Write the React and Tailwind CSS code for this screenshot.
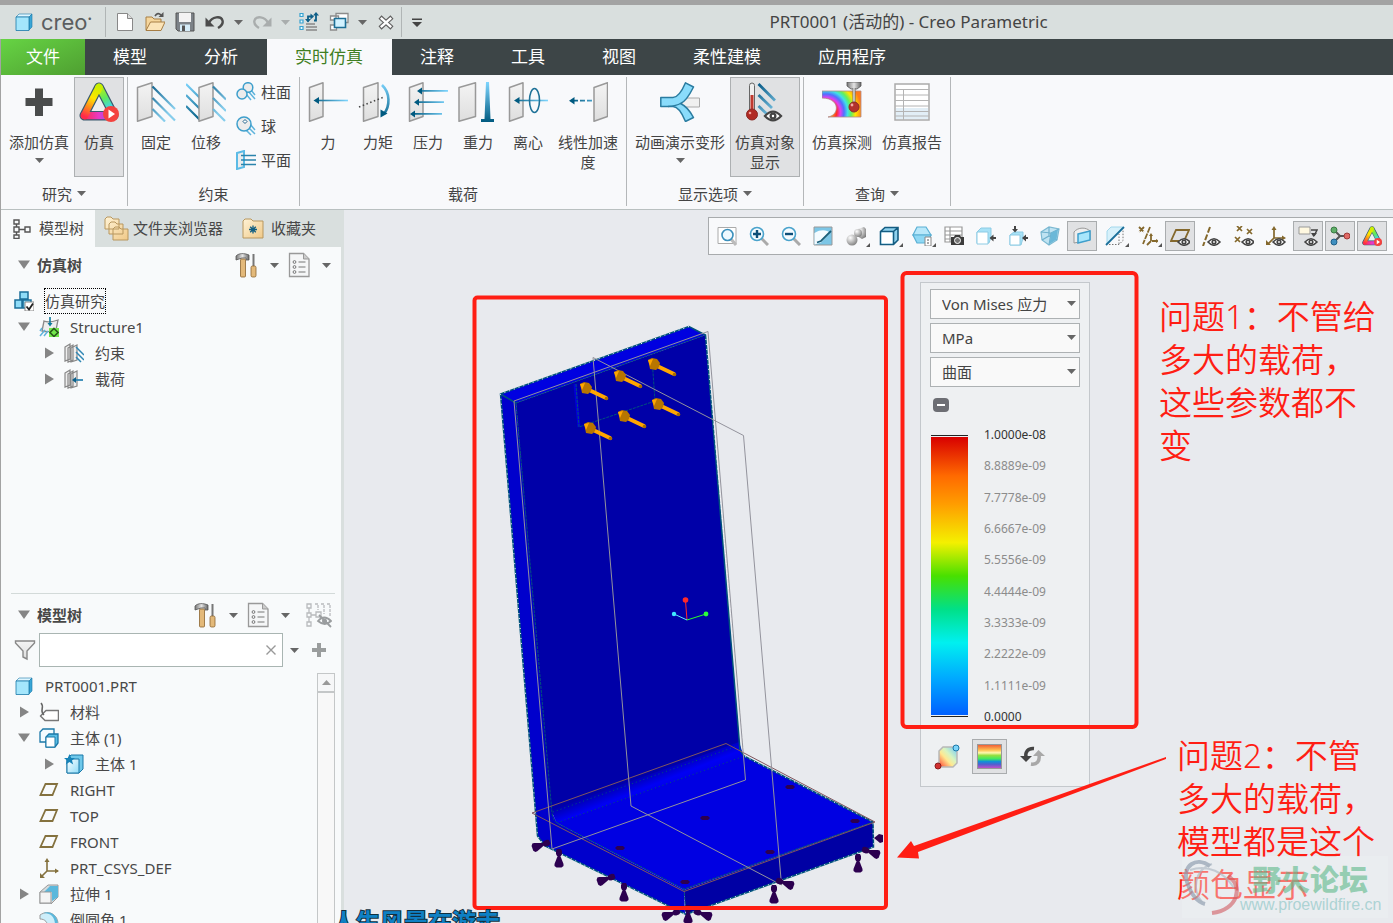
import React, { useState } from 'react';

const EDGE = '#1b78a8';

function Caret({ color = '#666' }) {
  return (
    <svg width="9" height="5" viewBox="0 0 9 5" className="shrink-0" aria-hidden="true">
      <path d="M0 0h9L4.500 5z" fill={color} />
    </svg>
  );
}

function Icon({ size = 20, children }) {
  return (
    <svg width={size} height={size} viewBox={`0 0 ${size} ${size}`} fill="none" className="shrink-0" aria-hidden="true">
      {children}
    </svg>
  );
}

function Defs() {
  return (
    <svg width="0" height="0" className="absolute" aria-hidden="true">
      <defs>
        <linearGradient id="plate" x1="0" y1="0" x2="0" y2="1">
          <stop offset="0" stopColor="#f4f4f4" />
          <stop offset="1" stopColor="#dedede" />
        </linearGradient>
        <linearGradient id="fadeR" gradientUnits="userSpaceOnUse" x1="4" y1="0" x2="40" y2="0">
          <stop offset="0" stopColor="#005a80" />
          <stop offset="1" stopColor="#7fd6ff" />
        </linearGradient>
        <linearGradient id="fadeD" gradientUnits="userSpaceOnUse" x1="16" y1="0" x2="40" y2="24">
          <stop offset="0" stopColor="#0a5c88" />
          <stop offset="1" stopColor="#86cdec" />
        </linearGradient>
        <linearGradient id="fadeV" gradientUnits="userSpaceOnUse" x1="0" y1="0" x2="0" y2="40">
          <stop offset="0" stopColor="#7fd6ff" />
          <stop offset="1" stopColor="#005a80" />
        </linearGradient>
        <linearGradient id="triL" gradientUnits="userSpaceOnUse" x1="20" y1="4" x2="5" y2="34">
          <stop offset="0" stopColor="#c8f000" />
          <stop offset=".4" stopColor="#ffe600" />
          <stop offset=".7" stopColor="#ff8a1a" />
          <stop offset="1" stopColor="#ff2a4a" />
        </linearGradient>
        <linearGradient id="triR" gradientUnits="userSpaceOnUse" x1="20" y1="4" x2="35" y2="34">
          <stop offset="0" stopColor="#c8f000" />
          <stop offset=".4" stopColor="#5fe860" />
          <stop offset=".7" stopColor="#40d8e8" />
          <stop offset="1" stopColor="#5080ff" />
        </linearGradient>
        <linearGradient id="triB" gradientUnits="userSpaceOnUse" x1="5" y1="34" x2="35" y2="34">
          <stop offset="0" stopColor="#ff2a4a" />
          <stop offset=".5" stopColor="#e83ac8" />
          <stop offset="1" stopColor="#7060ff" />
        </linearGradient>
        <linearGradient id="folder" x1="0" y1="0" x2="1" y2="1">
          <stop offset="0" stopColor="#fff3d6" />
          <stop offset="1" stopColor="#f0c988" />
        </linearGradient>
        <linearGradient id="aqua" x1="0" y1="0" x2="1" y2="1">
          <stop offset="0" stopColor="#ffffff" />
          <stop offset="1" stopColor="#8fdcf8" />
        </linearGradient>
        <linearGradient id="steel" x1="0" y1="0" x2="1" y2="0">
          <stop offset="0" stopColor="#777" />
          <stop offset=".5" stopColor="#e4e4e4" />
          <stop offset="1" stopColor="#666" />
        </linearGradient>
        <radialGradient id="probe" gradientUnits="userSpaceOnUse" cx="4" cy="30" r="36">
          <stop offset=".2" stopColor="#ff8a1a" />
          <stop offset=".3" stopColor="#ff2a2a" />
          <stop offset=".4" stopColor="#e040f0" />
          <stop offset=".5" stopColor="#5070ff" />
          <stop offset=".6" stopColor="#40e0e8" />
          <stop offset=".7" stopColor="#60f060" />
          <stop offset=".82" stopColor="#ffe600" />
          <stop offset="1" stopColor="#ff7a1a" />
        </radialGradient>
        <radialGradient id="ball" cx=".35" cy=".3" r=".8">
          <stop offset="0" stopColor="#ffffff" />
          <stop offset="1" stopColor="#777" />
        </radialGradient>
      </defs>
    </svg>
  );
}

/* ---------- shared drawings ---------- */

function Triangle() {
  return (
    <>
      <path d="M20 5.500 5.500 33.500h29z" stroke="#3b5a6e" strokeWidth="10" strokeLinejoin="round" />
      <path d="M5.500 33.500h29" stroke="url(#triB)" strokeWidth="7.500" strokeLinecap="round" />
      <path d="M20 5.500 34.500 33.500" stroke="url(#triR)" strokeWidth="7.500" strokeLinecap="round" />
      <path d="M20 5.500 5.500 33.500" stroke="url(#triL)" strokeWidth="7.500" strokeLinecap="round" />
      <path d="M20 13 11.500 29.500h17z" fill="#eef0f1" stroke="#3b5a6e" strokeWidth="1.200" />
      <circle cx="32" cy="32" r="8" fill="#f4423f" />
      <path d="M29.500 27.500v9l6.500-4.500z" fill="#fff" />
    </>
  );
}

function Eye({ x, y }) {
  return (
    <g transform={`translate(${x} ${y})`}>
      <path d="M-6 0Q0-6.500 6 0 0 6.500-6 0z" fill="#fff" stroke="#444" strokeWidth="1.600" />
      <circle r="2.600" fill="#444" />
      <circle r=".9" fill="#fff" />
    </g>
  );
}

function Cube() {
  return (
    <g stroke={EDGE} strokeLinejoin="round">
      <path d="M2 5 5 2h13l-3 3z" fill="#dff6ff" strokeWidth=".6" />
      <path d="M15 5l3-3v13l-3 3z" fill="#3aa6d6" strokeWidth=".6" />
      <path d="M2 5h13v13.500H2z" fill="#a4e6fc" strokeWidth=".8" />
    </g>
  );
}

const Plate = ({ d }) => <path d={d} fill="url(#plate)" stroke="#999" strokeWidth="1.500" strokeLinejoin="round" />;

/* ---------- ribbon icons, 40 x 40 ---------- */

const ribbonIcons = {
  add: <path d="M16 6.500h8V16h9.500v8H24v10h-8V24H6.500v-8H16z" fill="#4a4c4c" />,
  sim: <Triangle />,
  fixed: (
    <>
      <Plate d="M1.500 5.500 16 .8v33.700L1.500 39.200z" />
      <path d="M16.500 4.500 39 27M16.500 16 39 38.500M16.500 27 29 39.500" stroke="url(#fadeD)" strokeWidth="2.200" />
    </>
  ),
  shift: (
    <>
      <path d="M0 2 14 16M0 13 14 27M0 24l14 14" stroke="url(#fadeV)" strokeWidth="2.200" />
      <Plate d="M13 5.500 27 .8v33.700L13 39.200z" />
      <path d="M27 4.500 40 17.500M27 16l13 13M27 27l12 12" stroke="url(#fadeD)" strokeWidth="2.200" />
    </>
  ),
  force: (
    <>
      <Plate d="M1.500 5.500 15 .8v33.700L1.500 39.200z" />
      <path d="M9 17.700h31v1.600H9z" fill="url(#fadeR)" />
      <path d="M5.500 18.500 11 15v7z" fill="#005a80" />
    </>
  ),
  moment: (
    <>
      <Plate d="M5.500 5.500 20 .8v33.700L5.500 39.200z" />
      <path d="M1 25 26 15" stroke="#444" strokeWidth="1.500" strokeDasharray="1.500 2.500" />
      <path d="M24 3C32.500 11 32 24 26 32" stroke="url(#fadeV)" strokeWidth="2.600" />
      <path d="M22.500 35.500V27.500l7 4z" fill="#005a80" />
    </>
  ),
  pressure: (
    <>
      <Plate d="M1.500 5.500 15 .8v33.700L1.500 39.200z" />
      <path d="M11 8h29v1.800H11zM8 19.300h28v1.800H8zM4 31h30v1.800H4z" fill="url(#fadeR)" />
      <path d="M9 9l5-3.500v7zM6 20.200l5-3.500v7zM2 32l5-3.500v7z" fill="#005a80" />
    </>
  ),
  gravity: (
    <>
      <Plate d="M1 5.500 17.500.8v33.700L1 39.200z" />
      <path d="M28 0h3l1.500 37H36v3H23v-3h3.500z" fill="url(#fadeV)" />
    </>
  ),
  spin: (
    <>
      <Plate d="M1.500 5.500 15 .8v33.700L1.500 39.200z" />
      <path d="M9 17.700h31v1.600H9z" fill="url(#fadeR)" />
      <path d="M6 18.500 11.500 15v7z" fill="#005a80" />
      <ellipse cx="26.500" cy="18.500" rx="5" ry="12" stroke="#1f7298" strokeWidth="1.600" />
    </>
  ),
  linear: (
    <>
      <Plate d="M26 5.500 39.500.8v33.700L26 39.200z" />
      <path d="M6 17.800h4v1.800H6zM12 17.800h5v1.800h-5zM19 17.800h5v1.800h-5z" fill="url(#fadeR)" />
      <path d="M1 18.700 6.500 15v7.500z" fill="#005a80" />
    </>
  ),
  deform: (
    <>
      <path d="M22 16h17.500v9H22z" fill="#f0f0f0" stroke="#aaa" />
      <path d="M.8 15.500H13C18 15.500 22 9 25.500.8L33.500 5C29 14 25 20 20.500 21.500 26 24 30 29 33.500 35.500l-8 4C22 31 18 24.500 13 24.500H.8z" fill="#8adcfb" stroke="#2a7ca0" strokeWidth="1.500" strokeLinejoin="round" />
      <path d="M8 24.500C14 24 18 23 20.500 21.500" stroke="#2a7ca0" strokeWidth="1.300" />
    </>
  ),
  objects: (
    <>
      <rect x="4.500" y="1" width="5" height="30" rx="2.500" fill="#eee" stroke="#666" />
      <path d="M5.500 13h3v17h-3z" fill="#c0392f" />
      <circle cx="7" cy="32.500" r="5.500" fill="#b02a24" stroke="#8a2a26" />
      <circle cx="5" cy="31" r="1.300" fill="#f0a09a" />
      <path d="M13.500 2 30 18.500M13.500 13 27 26M13.500 24 24 34" stroke="url(#fadeD)" strokeWidth="2.800" />
      <g transform="translate(28 34) scale(1.350)"><Eye x={0} y={0} /></g>
    </>
  ),
  probe: (
    <>
      <path d="M0 9h39v26H6C18 33 18 16 0 16z" fill="url(#probe)" stroke="#b08a8a" strokeWidth=".8" />
      <path d="M25 0h14v4l-4 3h-6l-4-3z" fill="url(#steel)" stroke="#555" strokeWidth=".8" />
      <path d="M30.500 6h3v18h-3z" fill="url(#steel)" />
      <circle cx="32" cy="25" r="5" fill="#b3322c" stroke="#8a2a26" />
      <circle cx="30" cy="23" r="1.400" fill="#f3a9a4" />
    </>
  ),
  report: (
    <>
      <path d="M3 2h34v36H3z" fill="#fff" stroke="#aaa" strokeWidth="1.500" />
      <path d="M4 26h32v11H4z" fill="#e2eef6" />
      <path d="M3 7.500h34M3 13h34M3 18.500h34M3 24h34M3 29.500h34M3 34h34M11.500 7.500V38" stroke="#b4b4b4" />
    </>
  ),
};

const groups = [
  {
    label: '研究',
    more: true,
    items: [
      { icon: 'add', text: '添加仿真', w: 'w-[70px]', more: true },
      { icon: 'sim', text: '仿真', w: 'w-[50px]', on: true },
    ],
  },
  {
    label: '约束',
    items: [
      { icon: 'fixed', text: '固定', w: 'w-[50px]' },
      { icon: 'shift', text: '位移', w: 'w-[50px]' },
    ],
    side: true,
  },
  {
    label: '载荷',
    items: [
      { icon: 'force', text: '力', w: 'w-[50px]' },
      { icon: 'moment', text: '力矩', w: 'w-[50px]' },
      { icon: 'pressure', text: '压力', w: 'w-[50px]' },
      { icon: 'gravity', text: '重力', w: 'w-[50px]' },
      { icon: 'spin', text: '离心', w: 'w-[50px]' },
      { icon: 'linear', text: '线性加速度', w: 'w-[70px]' },
    ],
  },
  {
    label: '显示选项',
    more: true,
    items: [
      { icon: 'deform', text: '动画演示变形', w: 'w-[100px]', more: true },
      { icon: 'objects', text: '仿真对象显示', w: 'w-[70px]', on: true },
    ],
  },
  {
    label: '查询',
    more: true,
    items: [
      { icon: 'probe', text: '仿真探测', w: 'w-[70px]' },
      { icon: 'report', text: '仿真报告', w: 'w-[70px]' },
    ],
  },
];

const sideItems = [
  {
    text: '柱面',
    icon: (
      <>
        <path d="M10 12l5 6M12 9l7 8M15 8l4 5" stroke="#5fb4dc" strokeWidth="1.500" />
        <circle cx="12" cy="5.500" r="4.800" fill="#ececec" stroke="#3e9fcc" strokeWidth="1.500" />
        <circle cx="6" cy="12" r="5" fill="#ececec" stroke="#3e9fcc" strokeWidth="1.500" />
      </>
    ),
  },
  {
    text: '球',
    icon: (
      <>
        <path d="M9 13l6 6M12 11l7 7M14 8l5 6" stroke="#5fb4dc" strokeWidth="1.500" />
        <circle cx="8" cy="8" r="7" fill="#ececec" stroke="#3e9fcc" strokeWidth="1.500" />
        <path d="M9 3.500l2 2-2 2-2-2z" fill="#fff" stroke="#1b5f88" />
      </>
    ),
  },
  {
    text: '平面',
    icon: (
      <>
        <path d="M1 3l7-2v16l-7 2z" fill="#ececec" stroke="#5bbbe6" strokeWidth="2" />
        <path d="M5 5.500h15M5 10h15M5 14.500h15" stroke="#2a84ac" strokeWidth="1.500" />
      </>
    ),
  },
];

function RibbonButton({ item }) {
  return (
    <button
      type="button"
      className={`${item.w} flex h-[100px] flex-col items-center border px-1 pt-1 leading-5 ${
        item.on ? 'border-[#adb0b2] bg-[#e0e1e3]' : 'border-transparent'
      }`}
    >
      <Icon size={40}>{ribbonIcons[item.icon]}</Icon>
      <span className="-mx-1 mt-[10px] text-center">
        {item.text.length === 5 ? <>线性加速<br />度</> : item.text.startsWith('仿真对象') ? <>仿真对象<br />显示</> : item.text}
      </span>
      {item.more && <span className="pt-[6px]"><Caret /></span>}
    </button>
  );
}

function Ribbon() {
  return (
    <div className="flex border-b border-[#b9c0c0] bg-[#f8f9fb] pt-[2px] pb-[3px] text-[15px] text-[#444]">
      {groups.map(g => (
        <section key={g.label} className="flex shrink-0 flex-col border-r border-[#b4b7b9] px-[3px]">
          <div className="flex h-[100px]">
            {g.items.map(item => <RibbonButton key={item.text} item={item} />)}
            {g.side && (
              <div className="-mt-[2px] flex w-[65px] flex-col">
                {sideItems.map(s => (
                  <button key={s.text} type="button" className="flex h-[34px] items-center gap-[5px] pl-[5px] whitespace-nowrap">
                    <Icon>{s.icon}</Icon>
                    {s.text}
                  </button>
                ))}
              </div>
            )}
          </div>
          <div className="flex h-[29px] items-center justify-center gap-[5px] pt-1 leading-5">
            {g.label}
            {g.more && <Caret />}
          </div>
        </section>
      ))}
    </div>
  );
}

/* ---------- title bar ---------- */

const quick = {
  fresh: <><path d="M2.500 1.500h10l5 5v12h-15z" fill="#fff" stroke="#888" /><path d="M12.500 1.500v5h5" fill="#ddd" stroke="#888" /></>,
  open: (
    <>
      <path d="M1 18V5h6l2 2h7v4" fill="#f5d69c" stroke="#a77e45" />
      <path d="M1 18.500 5.500 10H20l-4 8.500z" fill="#fbe4b8" stroke="#a77e45" />
      <path d="M10 4c2-3 4-3 6-1" stroke="#555" strokeWidth="1.600" /><path d="M18.500 0v5h-5z" fill="#555" />
    </>
  ),
  save: (
    <>
      <path d="M1 1h18v18H3l-2-2z" fill="#7c8288" stroke="#555" />
      <path d="M4 1h12v9H4z" fill="#f3f3f3" /><path d="M5 12.500h10V19H5z" fill="#d5ecf8" /><path d="M7 13.500h3V19H7z" fill="#555" />
    </>
  ),
  undo: <><path d="M4 11C7 4.500 16 3.500 17.500 8.500c1 3.500-2 6-4.500 7.500" stroke="#4c4c4c" strokeWidth="2.400" /><path d="M.5 5.500V14.500h9z" fill="#4c4c4c" /></>,
  redo: <><path d="M16 11C13 4.500 4 3.500 2.500 8.500c-1 3.500 2 6 4.500 7.500" stroke="#a9adad" strokeWidth="2.400" /><path d="M19.500 5.500V14.500h-9z" fill="#a9adad" /></>,
  regen: (
    <>
      <path d="M1 1.500h3v3H1zM1 8h3v3H1zM1 14.500h3v3H1z" fill="#e8faff" stroke="#37a2d0" strokeWidth="1.200" />
      <path d="M7 12h9M7 15h11M7 18h11" stroke="#888" strokeWidth="1.500" />
      <path d="M9 9.500V4.500h3" stroke="#0e5f88" strokeWidth="1.800" /><path d="M11.500 1.500 15 4.500l-3.500 3zM6 7h6L9 10.500z" fill="#0e5f88" />
      <path d="M17 1.500v7h-2" stroke="#0e5f88" strokeWidth="1.800" /><path d="M14 3.500 17 0l3 3.500z" fill="#0e5f88" />
    </>
  ),
  windows: (
    <>
      <path d="M7 1.500h12v9H7zM1.500 4h8v4h-8zM1.500 13h6v5h-6z" fill="#fff" stroke="#8c8c8c" strokeWidth="1.300" />
      <path d="M5.500 6.500h11v9h-11z" fill="#d2f2ff" stroke="#1d6f96" strokeWidth="1.600" />
    </>
  ),
  close: <><path d="M4 5l12 11M16 5 4 16" stroke="#606060" strokeWidth="4.500" /><path d="M4.800 5.800l10.400 9.400M15.200 5.800 4.800 15.200" stroke="#fff" strokeWidth="2.400" /></>,
};

function QuickButton({ name, label }) {
  return (
    <button type="button" aria-label={label} className="flex h-full w-[30px] items-center justify-center">
      <Icon>{quick[name]}</Icon>
    </button>
  );
}

function QuickCaret({ label, color }) {
  return (
    <button type="button" aria-label={label} className="flex h-full w-[17px] items-center justify-center">
      <Caret color={color} />
    </button>
  );
}

function TitleBar() {
  return (
    <header className="flex h-[39px] items-center border-t-[5px] border-[#a3a3a3] bg-[#d9dfde]">
      <div className="flex h-[30px] w-[106px] shrink-0 items-center border-r border-[#b0b5b5] pl-[14px] font-['Inter'] text-[22px] text-[#5b5e60]">
        <Icon><Cube /></Icon>
        <span className="pl-[7px] leading-6">creo<span className="align-top text-[8px] leading-4">•</span></span>
      </div>
      <div className="flex h-full shrink-0 items-center pl-1">
        <QuickButton name="fresh" label="新建" />
        <QuickButton name="open" label="打开" />
        <QuickButton name="save" label="保存" />
        <QuickButton name="undo" label="撤消" />
        <QuickCaret label="撤消列表" />
        <QuickButton name="redo" label="重做" />
        <QuickCaret label="重做列表" color="#a9adad" />
        <QuickButton name="regen" label="重新生成" />
        <QuickButton name="windows" label="窗口" />
        <QuickCaret label="窗口列表" />
        <QuickButton name="close" label="关闭" />
        <span className="h-[30px] w-px bg-[#b0b5b5]" />
        <button type="button" aria-label="自定义" className="flex h-full w-[30px] items-center justify-center">
          <Icon><path d="M5 6.500h10v1.500H5zM5 10h10l-5 5z" fill="#444" /></Icon>
        </button>
      </div>
      <h1 className="flex-1 truncate pr-2 text-center text-[17px] text-[#444]">PRT0001 (活动的) - Creo Parametric</h1>
    </header>
  );
}

const tabs = ['模型', '分析', '实时仿真', '注释', '工具', '视图', '柔性建模', '应用程序'];

function TabBar({ active, onSelect }) {
  return (
    <nav className="flex h-9 bg-[#3d4547] text-[17px] text-white">
      <button type="button" className="w-[84px] bg-linear-to-br from-[#66d444] to-[#4f9f31]">文件</button>
      {tabs.map(t => (
        <button
          key={t}
          type="button"
          onClick={() => onSelect(t)}
          className={`pr-[29px] pl-7 whitespace-nowrap ${t === active ? 'bg-[#f8f9fb] text-[#3f7f22]' : ''}`}
        >
          {t}
        </button>
      ))}
    </nav>
  );
}

/* ---------- left panel ---------- */

const planeIcon = <path d="M6.500 4H18l-4.500 11H1.500z" stroke="#84713e" strokeWidth="1.800" />;

const platesIcon = (
  <path d="M1 4l5-3v15l-5 2zM4 5l5-3v15l-5 2zM7 5l6-3v15l-6 2z" fill="#eee" stroke="#888" strokeWidth="1.200" />
);

const treeIcons = {
  study: (
    <>
      <path d="M6 1h8v7H6zM1 9h7v8H1zM9 9h8v8H9z" fill="#8fdcf8" stroke="#1b6f9a" strokeWidth="1.500" />
      <path d="M11 11h9v9h-9z" fill="#fff" stroke="#888" /><path d="M12.500 15.500l2.500 3 4-6" stroke="#222" strokeWidth="1.800" />
    </>
  ),
  structure: (
    <>
      <path d="M5 4c4 2 8 1 14-1l-2 10c-5 2-9 2-14 1z" fill="#eee" stroke="#888" strokeWidth="1.300" />
      <path d="M11 0v8" stroke="#0e7a9c" strokeWidth="1.600" /><path d="M8.500 6h5L11 9.500z" fill="#0e7a9c" />
      <path d="M1 19l5-6M5 19l4-5M1 14l2-3" stroke="#5fb4dc" strokeWidth="1.500" />
      <path d="M10 11h10v9H10z" fill="#74e84c" /><path d="M15 11.500l4 4-4 4-4-4z" stroke="#285a1a" strokeWidth="1.600" />
    </>
  ),
  constraints: <>{platesIcon}<path d="M12 4l8 8M12 9l8 8M12 14l5 5" stroke="#2f86b4" strokeWidth="1.500" /></>,
  loads: <>{platesIcon}<path d="M10 11h9" stroke="#2f86b4" strokeWidth="1.800" /><path d="M8 11l4-3v6z" fill="#0e5f88" /></>,
  part: <Cube />,
  material: (
    <>
      <path d="M7 8.500h12.500v10H6L1.500 14z" fill="#fff" stroke="#777" strokeWidth="1.500" strokeLinejoin="round" />
      <path d="M2 1c4 4-2 8 3 12" stroke="#666" strokeWidth="1.600" />
    </>
  ),
  bodies: (
    <>
      <path d="M1 4l3-3h11v11l-2 2H1z" fill="#f4fcff" stroke={EDGE} strokeWidth="1.300" />
      <path d="M7 9l3-3h9v9l-3 4H7z" fill="#5bbfe6" stroke={EDGE} strokeWidth="1.300" /><path d="M7 9h9v10H7z" fill="#fff" stroke={EDGE} />
    </>
  ),
  body: (
    <>
      <path d="M3 5l4-4h12v14l-4 4H3z" fill="#6fc8ea" stroke={EDGE} /><path d="M3 5h12v14H3z" fill="url(#aqua)" stroke={EDGE} />
      <path d="M5.500 0l1.700 4H11L8 6.500l1.200 4-3.700-2.500-3.700 2.500 1.200-4L0 4h3.800z" fill="#1783b8" />
    </>
  ),
  plane: planeIcon,
  csys: (
    <>
      <path d="M8 2v11h11M8 13l-6 6" stroke="#84713e" strokeWidth="1.600" />
      <path d="M8 0l2.500 4h-5zM20 13l-4 2.500v-5zM1 20v-5l5 5z" fill="#84713e" />
    </>
  ),
  extrude: (
    <>
      <path d="M1 8l8-7h10v12l-7 7H1z" fill="#d6dadc" stroke="#999" /><path d="M5 8l6-6h8v11l-6 4V8z" fill="#5bb8dc" />
      <path d="M1 8h11v11H1z" fill="#f4f4f4" stroke="#999" />
    </>
  ),
  round: <><path d="M1 5C10-1 19 5 19 14v5H9C9 12 6 9 1 9z" fill="#cdeefa" stroke="#999" /><path d="M4 3c9 0 12 5 12 12h3C19 6 12 0 4 3z" fill="#5bb8dc" /></>,
};

const studyRows = [
  { icon: 'study', text: '仿真研究', level: 0, selected: true },
  { icon: 'structure', text: 'Structure1', level: 1, open: true },
  { icon: 'constraints', text: '约束', level: 2, open: false },
  { icon: 'loads', text: '载荷', level: 2, open: false },
];

const modelRows = [
  { icon: 'part', text: 'PRT0001.PRT', level: 0 },
  { icon: 'material', text: '材料', level: 1, open: false },
  { icon: 'bodies', text: '主体 (1)', level: 1, open: true },
  { icon: 'body', text: '主体 1', level: 2, open: false },
  { icon: 'plane', text: 'RIGHT', level: 1 },
  { icon: 'plane', text: 'TOP', level: 1 },
  { icon: 'plane', text: 'FRONT', level: 1 },
  { icon: 'csys', text: 'PRT_CSYS_DEF', level: 1 },
  { icon: 'extrude', text: '拉伸 1', level: 1, open: false },
  { icon: 'round', text: '倒圆角 1', level: 1 },
];

function Twisty({ open }) {
  return (
    <svg width="12" height="12" viewBox="0 0 12 12" aria-hidden="true">
      <path d={open ? 'M0 1.500h12L6 10z' : 'M2 .5 11 6l-9 5.500z'} fill="#858585" />
    </svg>
  );
}

function Tree({ rows }) {
  return (
    <ul className="flex-1">
      {rows.map(row => (
        <li key={row.text} className={`flex h-[26px] items-center ${row.level === 2 ? 'pl-[38px]' : 'pl-[13px]'}`}>
          {row.level > 0 && (
            <span className="w-[25px] pl-1">
              {row.open !== undefined && (
                <button type="button" aria-label={row.text} className="flex"><Twisty open={row.open} /></button>
              )}
            </span>
          )}
          <Icon>{treeIcons[row.icon]}</Icon>
          <span
            className={`ml-[10px] border border-dotted leading-6 whitespace-nowrap ${row.selected ? 'border-black' : 'border-transparent'}`}
          >
            {row.text}
          </span>
        </li>
      ))}
    </ul>
  );
}

function ToolsIcon() {
  return (
    <Icon size={26}>
      <path d="M1 4c3-3 8-3 13-1v5h-3V6H7L1 8z" fill="url(#steel)" stroke="#555" strokeWidth=".8" />
      <rect x="5.500" y="7" width="5" height="18" rx="1" fill="#e3b97a" stroke="#8a6330" strokeWidth=".8" />
      <path d="M17.500 2h2v12h-2z" fill="#777" /><rect x="16" y="14" width="5" height="11" rx="1.500" fill="#e3b97a" stroke="#8a6330" strokeWidth=".8" />
    </Icon>
  );
}

function SettingsIcon() {
  return (
    <Icon size={26}>
      <path d="M2.500 1.500h14l5.500 5.500v17.500H2.500z" fill="#f5f6f7" stroke="#999" strokeWidth="1.300" />
      <path d="M16.500 1.500V7H22" fill="#ccc" stroke="#999" />
      <path d="M11.500 10h7M11.500 15h7M11.500 20h7" stroke="#777" strokeWidth="1.200" />
      <g stroke="#777"><circle cx="7.500" cy="10" r="1.400" /><circle cx="7.500" cy="15" r="1.400" /><circle cx="7.500" cy="20" r="1.400" /></g>
    </Icon>
  );
}

function TreeHeader({ title, hide }) {
  return (
    <div className="flex h-9 items-center pr-[2px] pl-[17px]">
      <button type="button" className="flex flex-1 items-center gap-[7px] text-left font-bold">
        <Twisty open />
        {title}
      </button>
      <button type="button" aria-label="设置" className="flex w-[26px]"><ToolsIcon /></button>
      <span className="flex w-[26px] justify-center"><Caret /></span>
      <button type="button" aria-label="显示" className="flex w-[26px]"><SettingsIcon /></button>
      <span className="flex w-[26px] justify-center"><Caret /></span>
      {hide && (
        <button type="button" aria-label="隐藏" className="flex w-[41px] justify-center">
          <Icon size={26}>
            <g stroke="#b8bbbd" strokeWidth="1.300">
              <path d="M1 2h4v4H1zM1 11h4v4H1zM1 20h4v4H1zM3 6v5M3 15v5M5 13h5M10 10h5v5h-5z" />
              <path d="M9 2h3v6M15 2h3v10M21 2h3v12" strokeDasharray="3 1" />
            </g>
            <path d="M12 19q6-7 13 0-6 6-13 0zM13 13l12 12" stroke="#9a9d9f" strokeWidth="1.800" />
            <circle cx="18.500" cy="19" r="2.500" fill="#9a9d9f" />
          </Icon>
        </button>
      )}
    </div>
  );
}

function SidePanel() {
  const [filter, setFilter] = useState('');

  return (
    <aside className="flex w-[344px] shrink-0 flex-col border-r-[3px] border-l border-[#d9dfde] border-l-[#a3a3a3] bg-[#f8fafb] text-[15px] text-[#484848]">
      <div className="flex h-[37px] shrink-0 bg-[#d9dfde]">
        <button type="button" className="flex w-[94px] items-center gap-[6px] bg-[#f8fafb] pl-3">
          <Icon size={20}>
            <path d="M1 1h5v4H1zM1 8h5v5H1zM1 16h5v3.500H1zM3.500 5v3M3.500 13v3M6 10.500h6M12 8h5v5h-5z" stroke="#555" strokeWidth="1.400" />
          </Icon>
          模型树
        </button>
        <button type="button" className="flex items-center gap-[3px] pl-[9px]">
          <Icon size={26}>
            <g fill="url(#folder)" stroke="#b8975f">
              <path d="M1 13V3l2-2h4l2 2h6v10zM5 18V8l2-2h4l2 2h6v10zM9 24V13l2-2h4l2 2h7v11z" />
            </g>
          </Icon>
          文件夹浏览器
        </button>
        <button type="button" className="flex items-center gap-[6px] pl-[18px]">
          <Icon size={24}>
            <path d="M2 21V4l2-2h6l2 2h10v17z" fill="url(#folder)" stroke="#b8975f" />
            <path d="M12 8.500v8M8 12.500h8M9.200 9.700l5.600 5.600M14.800 9.700 9.200 15.300" stroke="#125f82" strokeWidth="1.300" />
          </Icon>
          收藏夹
        </button>
      </div>

      <section className="flex min-h-0 grow-[346] basis-0 flex-col overflow-hidden">
        <TreeHeader title="仿真树" />
        <div className="pt-[5px]"><Tree rows={studyRows} /></div>
      </section>

      <section className="flex min-h-0 grow-[330] basis-0 flex-col overflow-hidden">
        <div className="mr-[6px] ml-[10px] border-t border-[#d3dad9] pt-[3px]" />
        <TreeHeader title="模型树" hide />
        <div className="flex shrink-0 items-center pr-[15px] pl-[13px]">
          <Icon size={22}>
            <path d="M1.500 2h19v2L13 12v8l-4-2v-6L1.500 4z" fill="url(#plate)" stroke="#888" strokeWidth="1.400" />
          </Icon>
          <label className="ml-[3px] flex h-[34px] flex-1 items-center border border-[#a9b5b2] bg-white">
            <input
              aria-label="过滤"
              value={filter}
              onChange={e => setFilter(e.target.value)}
              className="h-full w-full min-w-0 px-2 outline-none"
            />
            <button type="button" aria-label="清除" onClick={() => setFilter('')} className="px-[5px]">
              <Icon size={12}><path d="M1.500 1.500l9 9M10.500 1.500l-9 9" stroke="#999" strokeWidth="1.400" /></Icon>
            </button>
          </label>
          <span className="mx-[7px] flex"><Caret /></span>
          <button type="button" aria-label="添加" className="ml-[6px]">
            <Icon size={14}><path d="M5 0h4v5h5v4H9v5H5V9H0V5h5z" fill="#9a9d9d" /></Icon>
          </button>
        </div>
        <div className="flex min-h-0 flex-1 pt-[6px]">
          <Tree rows={modelRows} />
          <div className="mr-[6px] flex w-[18px] flex-col border border-b-0 border-[#c4c7c8] bg-[#f2f3f4]">
            <button type="button" aria-label="向上滚动" className="flex h-[17px] items-center justify-center bg-[#f6f7f8]">
              <svg width="9" height="5" viewBox="0 0 9 5" aria-hidden="true"><path d="M4.500 0 9 5H0z" fill="#999" /></svg>
            </button>
            <div className="flex-1 border-t-2 border-[#c4c7c8] bg-[#f8f8f8]" />
          </div>
        </div>
      </section>
    </aside>
  );
}

/* ---------- graphics toolbar ---------- */

const brown = '#84682c';

const viewIcons = [
  { label: '重新调整', d: <><path d="M1 1.500h18v16H1z" fill="#fff" stroke="#aaa" /><path d="M14 13l5 6" stroke="#bbb" strokeWidth="3" /><circle cx="10.500" cy="9" r="5.500" fill="#eef9ff" stroke="#3b90bc" strokeWidth="1.600" /></> },
  { label: '放大', d: <><path d="M12 12l7 7" stroke="#aaa" strokeWidth="3" /><circle cx="8" cy="8" r="6.500" fill="#f4fbff" stroke="#4aa3cc" strokeWidth="1.600" /><path d="M4 8h8M8 4v8" stroke="#0e4f78" strokeWidth="2.400" /></> },
  { label: '缩小', d: <><path d="M12 12l7 7" stroke="#aaa" strokeWidth="3" /><circle cx="8" cy="8" r="6.500" fill="#f4fbff" stroke="#4aa3cc" strokeWidth="1.600" /><path d="M4 8h8" stroke="#0e4f78" strokeWidth="2.400" /></> },
  { label: '重画', d: <><path d="M1 1h18v18H1z" fill="#7cc6e6" stroke="#999" /><path d="M1.500 7C8 3 14 4 17 7L8 16.500 1.500 18.500z" fill="#f4fbff" /><path d="M18 5 8 15l-4 1.500" stroke="#1b5f7a" strokeWidth="1.800" /></> },
  { label: '渲染', more: true, d: <><path d="M12 3l6-2 2 2v8l-4 2-5-3z" fill="url(#ball)" /><circle cx="12" cy="7" r="4" fill="url(#ball)" /><circle cx="6" cy="14" r="5.500" fill="url(#ball)" /></> },
  { label: '显示样式', more: true, d: <><path d="M1.500 5.500 6 1.500h13v12.500l-4.500 4.500H1.500zM14.500 5.500l4.500-4M14.500 5.500v13M1.500 5.500h13" fill="#8fd2ee" stroke="#155d82" strokeWidth="1.600" /><path d="M2.500 6.500h11v11h-11z" fill="#fff" /></> },
  { label: '已保存方向', more: true, d: <><path d="M5 1h9l5 8H1z" fill="#b9e8fa" stroke="#5ab0d4" strokeWidth="1.200" /><path d="M1 9h18l-3 8H5z" fill="#8fd8f4" stroke="#5ab0d4" strokeWidth="1.200" /><path d="M13 11h6v9h-6z" fill="#fff" stroke="#888" /><path d="M15 14h2M15 17h2" stroke="#555" /></> },
  { label: '视图管理器', d: <><path d="M1 1h17v15H1zM1 5h17M1 9h17M1 13h17M6 1v15" fill="#fff" stroke="#999" strokeWidth="1.200" /><path d="M7 11h3l1-2h5l1 2h3v8H7z" fill="#3c3c3c" /><circle cx="13.500" cy="14.500" r="3" fill="#777" stroke="#fff" /></> },
  { label: '透视图', d: <><path d="M1 6l4-4h10v9l-2 6H1z" fill="#a8e2f7" stroke="#8ccbe4" /><path d="M1 6h11v12H1z" fill="#fff" stroke="#8ccbe4" /><path d="M15 12h5" stroke="#444" strokeWidth="2" /><path d="M13.500 12l4-3.500v7z" fill="#444" /></> },
  { label: '剖面', d: <><path d="M2 9l4-3h9v6l-2 7H2z" fill="#a8e2f7" stroke="#8ccbe4" /><path d="M2 9h10v10H2z" fill="#fff" stroke="#8ccbe4" /><path d="M15 12h5M7 0v4" stroke="#444" strokeWidth="2" /><path d="M14 12l4-3.500v7zM7 6.500 4 3h6z" fill="#444" /></> },
  { label: '线框', d: <><path d="M1 6 9 1l10 2-2 11-8 5-7-5z" fill="#bfe3f2" stroke="#7cb9d2" strokeWidth="1.200" /><path d="M1 6l10 1 8-4M11 7 9 19M2 14l7-4 8 4M9 1v9" stroke="#6eb0cc" strokeWidth="1.200" /><path d="M11 7l7-3.500-1.500 10L9.500 18z" fill="#6bb8d8" /></> },
  { label: '平面显示', on: true, d: <><path d="M2 6c4-5 12-5 16-1v9L2 17z" fill="#eee" stroke="#999" /><path d="M6 8l12-3v9L6 17z" fill="#a8e6fc" stroke="#3e9fcc" strokeWidth="1.500" /></> },
  { label: '区域', more: true, d: <><path d="M2 5l4-4h12L2 18z" fill="#d7f1fb" stroke="#a4d8ec" /><path d="M4 18.500h10l4-4V4M14 18V8" stroke="#777" strokeDasharray="1.500 1.500" /><path d="M1 19 19 1" stroke="#1b6f9a" strokeWidth="1.800" /></> },
  { label: '基准', more: true, d: <><path d="M1 1l5 5M6 1 1 6M12 1 5 18M13 9v6h6M13 15l-4 4" stroke={brown} strokeWidth="1.800" strokeDasharray="6 1" /><path d="M13 7l2 3h-4zM21 15l-3 2v-4z" fill={brown} /></> },
  { label: '平面', on: true, d: <><path d="M6 4h13l-5 11H1z" stroke={brown} strokeWidth="1.800" /><Eye x={14} y={16} /></> },
  { label: '轴', d: <><path d="M8 1 1 20" stroke={brown} strokeWidth="2" strokeDasharray="6 2" /><Eye x={12} y={16} /></> },
  { label: '点', d: <><path d="M3 0l5 5M8 0 3 5M13 3l5 5M18 3l-5 5M1 11l5 5M6 11l-5 5" stroke={brown} strokeWidth="1.700" /><Eye x={14} y={16} /></> },
  { label: '坐标系', d: <><path d="M8 2v10h10M8 12l-6 6" stroke={brown} strokeWidth="1.700" /><path d="M8 0l2.500 4h-5zM20 12l-4 2.500v-5zM0 19v-5l5 5z" fill={brown} /><Eye x={13} y={16} /></> },
  { label: '注释', on: true, d: <><path d="M1 1h11v7H1z" fill="#fff8e0" stroke="#999" /><path d="M13 4h6l-3 6" stroke="#444" strokeWidth="1.500" /><path d="M13 7h6l-3.500 4z" fill="#444" /><Eye x={13} y={16} /></> },
  { label: '旋转中心', on: true, d: <><path d="M4 4l6 6h7M10 10l-6 6" stroke="#555" strokeWidth="2" /><circle cx="4" cy="4" r="3" fill="#5fae68" stroke="#3a7a44" /><circle cx="17" cy="10" r="3" fill="#e06a66" stroke="#a03a38" /><circle cx="4" cy="16" r="3" fill="#3f8fc0" stroke="#1f5f88" /></> },
  { label: '仿真', on: true, d: <g transform="scale(.5)"><Triangle /></g> },
];

function ViewToolbar() {
  return (
    <div className="mt-[7px] ml-auto flex w-max gap-[2px] border border-r-0 border-[#a8abad] bg-[#f8f9fb] py-[3px] pr-[6px] pl-[3px]">
      {viewIcons.map(v => (
        <button
          key={v.label}
          type="button"
          aria-label={v.label}
          className={`flex h-[30px] items-center justify-center border ${v.more ? 'w-[31px]' : 'w-[30px]'} ${
            v.on ? 'border-[#a9acae] bg-[#e0e1e3]' : 'border-transparent'
          }`}
        >
          <Icon>{v.d}</Icon>
          {v.more && (
            <svg width="4" height="4" viewBox="0 0 4 4" className="-mr-1 mb-[3px] self-end" aria-hidden="true">
              <path d="M4 0v4H0z" fill="#555" />
            </svg>
          )}
        </button>
      ))}
    </div>
  );
}

/* ---------- model ---------- */

const loads = [[586, 388], [620, 376], [654, 364], [590, 428], [624, 416], [658, 404]];
const pins = [[790, 787], [705, 818], [620, 848], [855, 821], [770, 852], [685, 882]];
const downCones = [[559, 852], [624, 886], [774, 888], [858, 857], [688, 908]];
const leftCones = [[547, 843], [612, 877], [677, 912]];
const rightCones = [[697, 912], [779, 881], [865, 850]];

function Cone({ x, y, rotate = '' }) {
  return (
    <g transform={`translate(${x} ${y}) ${rotate}`}>
      <path d="M-2-3h4l1 2v3l-1 2h-4l-1-2v-3z" />
      <path d="M-1 3h2l3.500 9v2l-2 1.500h-5l-2-1.500v-2z" />
    </g>
  );
}

function Model() {
  return (
    <svg viewBox="344 210 1049 713" className="absolute top-0 left-0 h-[713px] w-[1049px]" fill="none" aria-hidden="true">
      <defs>
        <linearGradient id="fillet" gradientUnits="userSpaceOnUse" x1="640" y1="774" x2="649" y2="797">
          <stop offset="0" stopColor="#0000a4" />
          <stop offset=".6" stopColor="#0000f4" />
          <stop offset="1" stopColor="#0000e2" />
        </linearGradient>
      </defs>
      <path d="M500.500 394 689 326.500 705.500 335 516 403z" fill="#0000e0" />
      <path d="M500.500 394 516 403 552 813 557 823 684 890 685 914 545 846 537.500 836z" fill="#0000cc" />
      <path d="M516 403 705.500 335 740 750 551 815z" fill="#0000a8" />
      <path d="M551 810 739 742 744 757 557 824z" fill="url(#fillet)" />
      <path d="M557 823 744 756 873 822 684 890z" fill="#0000e2" />
      <path d="M684 890 873 822 873.500 847 686 914.500z" fill="#0000a4" />
      <path d="M575 384 579 427" stroke="#0000d8" strokeWidth="3" />

      <g stroke="#00527c">
        <path d="M516 403 705 335M516 403 552 813Q553 820 557 823L684 889 873 822M684 889 686 914M576 384 579 427 655 401 652 358" strokeDasharray="3 1" />
        <path d="M553 812 737 746M557 823 742 757" strokeDasharray="1 3" />
        <path d="M500.500 394 516 403M689 326.500 500.500 394 537.500 836 545 846 686 914.500 873.500 847 873 822 744 756 740 750 705.500 335z" strokeWidth="1.500" />
        <path d="M689 326.500 500.500 394 537.500 836 545 846 686 914.500 873.500 847 873 822 744 756 705.500 335" stroke="#fff" strokeDasharray="1 4" />
      </g>
      <path d="M532 813 726 743.500 875 822 684 891.500z" stroke="#80565e" />
      <path d="M514 401 708 331.500 745.500 780 552 849zM593 357.500 743.500 435.500 781.500 885 631 806z" stroke="#93939c" />

      {loads.map(([x, y]) => (
        <g key={`${x}-${y}`} transform={`translate(${x} ${y})`}>
          <path d="M1 1 20 10" stroke="#ffa600" strokeWidth="4" strokeLinecap="round" />
          <circle cx="20.500" cy="10.500" r="1.800" fill="#a86c00" />
          <path d="M-6-4-2-6 3-5 6-1 5 3 2 6-4 5-5 0z" fill="#b87600" />
          <path d="M-6-4-1-5-4 2z" fill="#ffa600" />
        </g>
      ))}

      <path d="M687 620 685.500 601" stroke="#ff2a2a" />
      <path d="M687 620 674 614" stroke="#60e8ff" />
      <path d="M687 620 706 614" stroke="#28ff28" />
      <circle cx="685.500" cy="600" r="2.800" fill="#ff2a2a" />
      <circle cx="674" cy="614" r="2.200" fill="#40e8ff" />
      <circle cx="706" cy="614" r="2.400" fill="#2aff3a" />

      <g fill="#2c0050">
        {pins.map(([x, y]) => <path key={x} d={`M${x - 5} ${y}l2-2h6l2 2-2 2h-6z`} />)}
        {downCones.map(([x, y]) => <Cone key={x} x={x} y={y} />)}
        {leftCones.map(([x, y]) => <Cone key={x} x={x} y={y} rotate="rotate(70)" />)}
        {rightCones.map(([x, y]) => <Cone key={x} x={x} y={y} rotate="rotate(-70)" />)}
        <path d="M874 838l5-4 4 1v7l-3 1z" />
      </g>
    </svg>
  );
}

/* ---------- result legend ---------- */

const legendSelects = [
  { label: '结果量', options: ['Von Mises 应力', '位移'] },
  { label: '单位', options: ['MPa', 'kPa'] },
  { label: '显示位置', options: ['曲面', '体积'] },
];

const ticks = [
  '1.0000e-08', '8.8889e-09', '7.7778e-09', '6.6667e-09', '5.5556e-09',
  '4.4444e-09', '3.3333e-09', '2.2222e-09', '1.1111e-09', '0.0000',
];

function Legend() {
  return (
    <div className="absolute top-[72px] left-[576px] flex w-[170px] flex-col border border-[#c4c8cc] bg-[#eef0f2] px-[9px] pt-[6px] pb-3 text-[15px] text-[#444]">
      <div className="flex flex-col gap-1">
        {legendSelects.map(s => (
          <label key={s.label} className="relative flex">
            <select aria-label={s.label} className="h-[30px] w-full appearance-none border border-[#adb1b3] bg-[#f9f9f9] pl-[11px]">
              {s.options.map(o => <option key={o}>{o}</option>)}
            </select>
            <span className="pointer-events-none absolute top-3 right-1"><Caret /></span>
          </label>
        ))}
      </div>
      <button type="button" aria-label="折叠" className="mt-[11px] ml-[3px] flex h-[14px] w-4 items-center justify-center rounded bg-[#6d6e74]">
        <span className="h-[2px] w-2 bg-white" />
      </button>
      <div className="mt-[14px] flex h-[300px] pl-px">
        <div className="my-[9px] flex w-[37px] flex-col border-y border-[#222] py-px">
          <div className="flex-1 bg-[linear-gradient(#d80000,#ff6a00_14%,#ff9c00_24%,#f4f000_38%,#48e000_50%,#00e088_62%,#00f0f0_74%,#00a8ff_87%,#0060ff)]" />
        </div>
        <ul className="ml-4 flex flex-col justify-between text-[12px] leading-[18px] text-[#8c8c8c]">
          {ticks.map((t, i) => (
            <li key={t} className={i === 0 || i === ticks.length - 1 ? 'text-[#333]' : ''}>{t}</li>
          ))}
        </ul>
      </div>
      <div className="mt-[13px] flex items-center gap-2">
        <button type="button" aria-label="最小最大值" className="flex h-[35px] w-[34px] items-center justify-center">
          <Icon size={26}>
            <defs>
              <linearGradient id="cubeHeat" x1="0" y1="1" x2="1" y2="0">
                <stop offset="0" stopColor="#ff4030" />
                <stop offset=".4" stopColor="#ffe890" />
                <stop offset=".6" stopColor="#d8f4c0" />
                <stop offset="1" stopColor="#6cc8ff" />
              </linearGradient>
            </defs>
            <path d="M5 7l4-4h14v16l-4 4H5z" fill="url(#cubeHeat)" stroke="#b8b8b8" strokeWidth="1.500" />
            <circle cx="4" cy="22" r="3" fill="#d03030" stroke="#8a1c1c" /><circle cx="22" cy="4" r="3" fill="#7cd4fa" stroke="#1b78a8" />
          </Icon>
        </button>
        <button type="button" aria-label="图例" className="flex h-[35px] w-[35px] items-center justify-center border border-[#a9acae] bg-[#e0e1e3]">
          <span className="h-[25px] w-[25px] border border-[#999] bg-[linear-gradient(#f0603a,#ffc050_22%,#fff8b0_34%,#98e040_45%,#40e860_60%,#1090d8_72%,#5060d0_84%,#c050c8)]" />
        </button>
        <button type="button" aria-label="交换" className="flex h-[35px] w-[34px] items-center justify-center">
          <Icon size={26}>
            <path d="M15 4.500C9 4 6 8 7 13" stroke="#444" strokeWidth="3.500" /><path d="M1 12h12l-6 6z" fill="#444" />
            <path d="M12 20c6 1 9-3 8-9" stroke="#a8a8a8" strokeWidth="3.500" /><path d="M26 12H14l5.500-6z" fill="#a8a8a8" />
          </Icon>
        </button>
      </div>
    </div>
  );
}

/* ---------- notes over the canvas ---------- */

function Notes() {
  return (
    <div className="pointer-events-none absolute inset-0 font-['Noto_Sans','Noto_Sans_CJK_SC',sans-serif] text-[33px] leading-[43px] font-[350] text-[#ff1e14]">
      <svg viewBox="344 210 1049 713" className="absolute top-0 left-0 h-[713px] w-[1049px]" fill="none" aria-hidden="true">
        <rect x="474.500" y="297.500" width="411.500" height="610.500" rx="3" stroke="#ff1e14" strokeWidth="4" />
        <rect x="902.500" y="273" width="234" height="454" rx="4" stroke="#ff1e14" strokeWidth="4" />
        <path d="M1166 757 1166 759 918 852 919 858.500 897 857.500 911 841 914 846z" fill="#ff1e14" />
      </svg>
      <p className="absolute top-[85px] left-[815px] whitespace-nowrap">
        问题1：不管给<br />多大的载荷，<br />这些参数都不<br />变
      </p>
      <p className="absolute top-[524px] left-[833px] whitespace-nowrap">
        问题2：不管<br />多大的载荷，<br />模型都是这个<br />颜色显示
      </p>
    </div>
  );
}

function Watermark() {
  return (
    <div className="absolute top-[646px] left-[838px] h-[62px] w-[206px] bg-[#eef2f3]/40">
      <svg width="62" height="62" viewBox="0 0 62 62" fill="none" className="absolute" aria-hidden="true">
        <path d="M28 10C14 0 0 10 5 26c4 12 10 20 18 22" stroke="#8a9aac" strokeOpacity=".65" strokeWidth="4" />
        <path d="M30 8C12 14 10 34 20 46M8 14c18-6 34 2 44 18" stroke="#a8b4c0" strokeOpacity=".6" strokeWidth="2" />
        <path d="M46 20c16 10 10 34-16 37" stroke="#d05a60" strokeOpacity=".6" strokeWidth="4" />
      </svg>
      <div className="absolute top-[2px] left-[70px] font-['Noto_Sans_CJK_SC',sans-serif] text-[29px] leading-[40px] font-black whitespace-nowrap text-[#5cb888]/60">野火论坛</div>
      <div className="absolute top-[38px] left-[58px] font-['Liberation_Sans',sans-serif] text-[16px] leading-[22px] whitespace-nowrap text-[#9ccccc]/80">www.proewildfire.cn</div>
    </div>
  );
}

export default function App() {
  const [tab, setTab] = useState('实时仿真');

  return (
    <div className="relative flex h-screen flex-col overflow-hidden font-['Noto_Sans','Noto_Sans_CJK_SC',sans-serif]">
      <Defs />
      <TitleBar />
      <div className="flex flex-col border-l border-[#a3a3a3]">
        <TabBar active={tab} onSelect={setTab} />
        <Ribbon />
      </div>
      <div className="flex min-h-0 flex-1">
        <SidePanel />
        <main className="relative min-w-0 flex-1 overflow-hidden bg-[#e8eaee]">
          <Model />
          <ViewToolbar />
          <Legend />
          <Notes />
          <Watermark />
        </main>
      </div>
      <div className="pointer-events-none absolute -bottom-[14px] left-[332px] font-['Noto_Sans_CJK_SC',sans-serif] text-[24px] leading-8 font-bold whitespace-nowrap text-[#0f80c4] [-webkit-text-stroke:2px_#12303f] [paint-order:stroke]">
        人生风景在游走
      </div>
    </div>
  );
}
